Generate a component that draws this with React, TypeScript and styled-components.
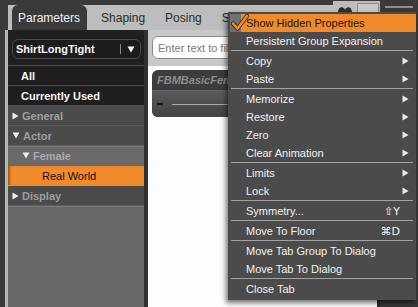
import React from "react";
import { styled, createGlobalStyle } from "styled-components";

const GlobalStyle = createGlobalStyle`
    html, body {
        margin: 0;
        padding: 0;
        background: #3a3a3a;
    }
    * {
        box-sizing: border-box;
    }
`;

type Row = {
    label: string;
    kind: "top" | "group" | "sub" | "selected";
    arrow?: "right" | "down";
};

const rows: Row[] = [
    { label: "All", kind: "top" },
    { label: "Currently Used", kind: "top" },
    { label: "General", kind: "group", arrow: "right" },
    { label: "Actor", kind: "group", arrow: "down" },
    { label: "Female", kind: "sub", arrow: "down" },
    { label: "Real World", kind: "selected" },
    { label: "Display", kind: "group", arrow: "right" },
];

type MenuEntry =
    | { sep: true }
    | { sep?: false; label: string; sub?: boolean; key?: string; checked?: boolean };

const menu: MenuEntry[] = [
    { label: "Show Hidden Properties", checked: true },
    { label: "Persistent Group Expansion" },
    { sep: true },
    { label: "Copy", sub: true },
    { label: "Paste", sub: true },
    { sep: true },
    { label: "Memorize", sub: true },
    { label: "Restore", sub: true },
    { label: "Zero", sub: true },
    { label: "Clear Animation", sub: true },
    { sep: true },
    { label: "Limits", sub: true },
    { label: "Lock", sub: true },
    { sep: true },
    { label: "Symmetry...", key: "⇧Y" },
    { sep: true },
    { label: "Move To Floor", key: "⌘D" },
    { sep: true },
    { label: "Move Tab Group To Dialog" },
    { label: "Move Tab To Dialog" },
    { sep: true },
    { label: "Close Tab" },
];

const Triangle = ({ dir, color }: { dir: "right" | "down"; color: string }) =>
    dir === "right" ? (
        <svg width="7" height="8" viewBox="0 0 7 8">
            <path d="M0.5 0.5 L6.5 4 L0.5 7.5 Z" fill={color} />
        </svg>
    ) : (
        <svg width="8" height="7" viewBox="0 0 8 7">
            <path d="M0.5 0.5 L7.5 0.5 L4 6.5 Z" fill={color} />
        </svg>
    );

const CheckMark = () => (
    <svg width="18" height="18" viewBox="0 0 18 18">
        <path
            d="M2 9.5 L6.5 14.5 L16 2"
            fill="none"
            stroke="#3a2a1a"
            strokeWidth="4.2"
            strokeLinecap="round"
            strokeLinejoin="round"
        />
        <path
            d="M2 9.5 L6.5 14.5 L16 2"
            fill="none"
            stroke="#f28c2a"
            strokeWidth="2.6"
            strokeLinecap="round"
            strokeLinejoin="round"
        />
    </svg>
);

export default function App() {
    return (
        <Screen>
            <GlobalStyle />
            <TopRow>
                <TabStrip>
                    <Tab $active>Parameters</Tab>
                    <Tab>Shaping</Tab>
                    <Tab>Posing</Tab>
                    <Tab>Surfaces</Tab>
                </TabStrip>
                <ToolBox>
                    <svg width="16" height="10" viewBox="0 0 16 10">
                        <path
                            d="M1 9 C1 2 7 2 8 6 C9 2 15 2 15 9 Z"
                            fill="#2e2e2e"
                        />
                    </svg>
                    <ToolButton>
                        <svg width="8" height="7" viewBox="0 0 8 7">
                            <path d="M0 0 L8 3.5 L0 7 Z" fill="#333" />
                        </svg>
                    </ToolButton>
                </ToolBox>
                <SideHead>
                    <SideHeadLine />
                </SideHead>
            </TopRow>
            <Main>
                <LeftEdge />
                <Pane>
                    <PresetBar>
                        <Select>
                            <SelectText>ShirtLongTight</SelectText>
                            <SelectDivider />
                            <Triangle dir="down" color="#f4f4f4" />
                        </Select>
                    </PresetBar>
                    <RowList>
                        {rows.map((r) => (
                            <TreeRow key={r.label} $kind={r.kind}>
                                {r.arrow && (
                                    <Triangle
                                        dir={r.arrow}
                                        color="#ececec"
                                    />
                                )}
                                <RowLabel $kind={r.kind}>{r.label}</RowLabel>
                            </TreeRow>
                        ))}
                    </RowList>
                    <Filler />
                </Pane>
                <Divider />
                <Content>
                    <SearchBar>
                        <Search>Enter text to filter by...</Search>
                    </SearchBar>
                    <PropList>
                        <Card>
                            <CardHead>FBMBasicFemale</CardHead>
                            <CardSlider>
                                <SliderDash />
                                <SliderTrack />
                            </CardSlider>
                        </Card>
                    </PropList>
                </Content>
                <ContentBorder />
                <SidePanel />
            </Main>

            <Menu>
                {menu.map((m, i) =>
                    m.sep ? (
                        <Separator key={i} />
                    ) : (
                        <MenuItem key={i} $checked={!!m.checked}>
                            {m.checked && (
                                <CheckCell>
                                    <CheckMark />
                                </CheckCell>
                            )}
                            <ItemLabel>{m.label}</ItemLabel>
                            {m.key && <Shortcut>{m.key}</Shortcut>}
                            {m.sub && (
                                <SubArrow>
                                    <Triangle dir="right" color="#e8e8e8" />
                                </SubArrow>
                            )}
                        </MenuItem>
                    )
                )}
            </Menu>
        </Screen>
    );
}

const Screen = styled.div`
    position: relative;
    width: 418px;
    height: 307px;
    overflow: hidden;

    background: #3a3a3a;
    font-family: "Liberation Sans", Arial, sans-serif;

    display: flex;
    flex-direction: column;
`;

const TopRow = styled.div`
    height: 30px;
    display: flex;
`;

const TabStrip = styled.div`
    width: 325px;
    margin-left: 8px;
    margin-top: 5px;
    padding-left: 4px;

    background: #bdbdbd;

    display: flex;
    align-items: stretch;
`;

const Tab = styled.div<{ $active?: boolean }>`
    display: flex;
    align-items: center;

    padding: ${(p) => (p.$active ? "0 7px 0 6px" : "0 10px")};
    margin-right: ${(p) => (p.$active ? "4px" : "0")};
    border-radius: 6px 6px 0 0;

    background: ${(p) => (p.$active ? "#3a3a3a" : "transparent")};
    color: ${(p) => (p.$active ? "#f4f4f4" : "#2c2c2c")};
    font-size: 12px;
    white-space: nowrap;
`;

const ToolBox = styled.div`
    width: 47px;
    margin-top: 1px;
    padding: 3px 0 0 4px;

    background: #bdbdbd;

    display: flex;
    align-items: flex-start;
    gap: 4px;
`;

const ToolButton = styled.div`
    width: 22px;
    height: 12px;
    margin-top: -1px;
    padding: 2px 0 0 4px;

    border: 1px solid #8a8a8a;
    background: #c9c9c9;
`;

const SideHead = styled.div`
    flex: 1;
    padding: 6px 5px 0 5px;
`;

const SideHeadLine = styled.div`
    height: 2px;
    background: #8c8c8c;
`;

const Main = styled.div`
    flex: 1;
    display: flex;
    min-height: 0;
`;

const LeftEdge = styled.div`
    width: 3px;
    margin-left: 5px;
    background: #b8b8b8;
`;

const Pane = styled.div`
    width: 136px;
    display: flex;
    flex-direction: column;
    background: #202020;
`;

const PresetBar = styled.div`
    height: 36px;
    padding: 9px 3px 0 4px;
    border-bottom: 1px solid #4e4e4e;
`;

const Select = styled.div`
    height: 20px;
    padding: 0 5px 0 3px;

    border: 1px solid #4a4a4a;
    border-radius: 6px;
    background: #1c1c1c;

    display: flex;
    align-items: center;
`;

const SelectText = styled.div`
    flex: 1;
    color: #f6f6f6;
    font-size: 11px;
    font-weight: bold;
`;

const SelectDivider = styled.div`
    width: 1px;
    height: 10px;
    margin-right: 6px;
    background: #8a8a8a;
`;

const RowList = styled.div`
    display: flex;
    flex-direction: column;
`;

const rowBg = {
    top: "#1f1f1f",
    group: "#4b4b4b",
    sub: "#6a6a6a",
    selected: "#f08a2a",
};

const TreeRow = styled.div<{ $kind: Row["kind"] }>`
    height: 20px;
    display: flex;
    align-items: center;
    gap: 3px;

    padding-left: ${(p) =>
        p.$kind === "top"
            ? "13px"
            : p.$kind === "sub"
            ? "14px"
            : p.$kind === "selected"
            ? "34px"
            : "4px"};

    background: ${(p) => rowBg[p.$kind]};
    border-bottom: 1px solid
        ${(p) =>
            p.$kind === "top"
                ? "#4a4a4a"
                : p.$kind === "group"
                ? "#5e5e5e"
                : "transparent"};
    box-shadow: ${(p) =>
        p.$kind === "selected"
            ? "inset 3px 0 2px -1px #a85a14"
            : p.$kind === "sub"
            ? "inset 0 1px 0 #7a7a7a"
            : "none"};
`;

const RowLabel = styled.span<{ $kind: Row["kind"] }>`
    font-size: 11px;
    font-weight: ${(p) => (p.$kind === "selected" ? "normal" : "bold")};
    color: ${(p) =>
        p.$kind === "top"
            ? "#f6f6f6"
            : p.$kind === "selected"
            ? "#111"
            : p.$kind === "sub"
            ? "#a9a9a9"
            : "#9e9e9e"};
`;

const Filler = styled.div`
    flex: 1;
    background: #686868;
    border-top: 1px solid #7a7a7a;
`;

const Divider = styled.div`
    width: 4px;
    background: #303030;
`;

const Content = styled.div`
    width: 229px;
    display: flex;
    flex-direction: column;
    background: #fdfdfd;
`;

const SearchBar = styled.div`
    height: 36px;
    padding: 6px 0 0 4px;
    background: #c8c8c8;
`;

const Search = styled.div`
    height: 23px;
    padding-left: 5px;

    border: 1px solid #8a8a8a;
    border-radius: 6px;
    background: #ffffff;

    display: flex;
    align-items: center;

    color: #7a7a7a;
    font-size: 11px;
    white-space: nowrap;
`;

const PropList = styled.div`
    padding: 4px 6px 0 4px;
`;

const Card = styled.div`
    height: 47px;
    border-radius: 6px;
    overflow: hidden;
    background: #3c3c3c;
`;

const CardHead = styled.div`
    height: 20px;
    padding-left: 5px;

    display: flex;
    align-items: center;

    color: #8c8c8c;
    font-size: 11px;
    font-weight: bold;
    font-style: italic;
`;

const CardSlider = styled.div`
    height: 27px;
    padding: 0 0 0 5px;

    background: linear-gradient(180deg, #5a5a5a 0%, #4c4c4c 55%, #444 100%);
    border-top: 1px solid #666;

    display: flex;
    align-items: center;
    gap: 9px;
`;

const SliderDash = styled.div`
    width: 6px;
    height: 2px;
    background: #111;
`;

const SliderTrack = styled.div`
    flex: 1;
    height: 1px;
    background: #a8a8a8;
`;

const ContentBorder = styled.div`
    width: 3px;
    background: #2c2c2c;
`;

const SidePanel = styled.div`
    flex: 1;
    background: #383838;
`;

const Menu = styled.div`
    position: absolute;
    left: 228px;
    top: 12px;
    width: 188px;
    padding: 2px 0;

    background: #4b4b4b;
    box-shadow: -2px 3px 5px rgba(0, 0, 0, 0.55);

    display: flex;
    flex-direction: column;
`;

const MenuItem = styled.div<{ $checked: boolean }>`
    position: relative;
    height: 18px;
    padding: 0 7px 0 18px;
    margin-left: ${(p) => (p.$checked ? "13px" : "0")};
    padding-left: ${(p) => (p.$checked ? "5px" : "18px")};

    background: ${(p) => (p.$checked ? "#f08a2a" : "transparent")};
    color: ${(p) => (p.$checked ? "#141414" : "#f2f2f2")};

    display: flex;
    align-items: center;

    font-size: 11px;
    white-space: nowrap;
`;

const CheckCell = styled.div`
    position: absolute;
    left: -11px;
    top: 0;
    width: 11px;
    height: 18px;
    background: #707070;

    svg {
        position: absolute;
        left: 1px;
        top: 0;
    }
`;

const ItemLabel = styled.span`
    flex: 1;
`;

const Shortcut = styled.span`
    margin-right: 9px;
    font-family: "DejaVu Sans", sans-serif;
    font-size: 11px;
`;

const SubArrow = styled.span`
    display: flex;
    align-items: center;
`;

const Separator = styled.div`
    height: 2px;
    margin: 0 3px;
    border-top: 1px solid #a2a2a2;
`;
